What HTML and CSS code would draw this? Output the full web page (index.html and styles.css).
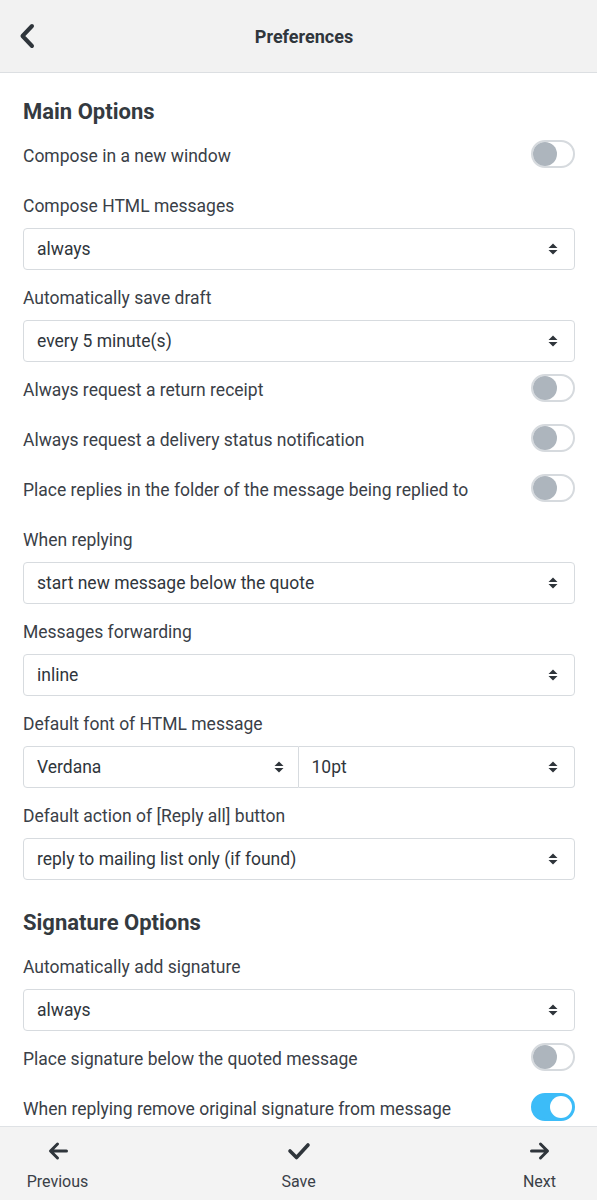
FILE: index.html
```html
<!DOCTYPE html>
<html lang="en">
<head>
<meta charset="utf-8">
<title>Preferences</title>
<link rel="stylesheet" href="styles.css">
</head>
<body>
<header class="topbar">
  <button class="back" aria-label="Back">
    <svg width="18" height="26" viewBox="0 0 18 26"><path d="M14 3 L4.5 13 L14 23" fill="none" stroke="#2f353b" stroke-width="4" stroke-linecap="round" stroke-linejoin="round"/></svg>
  </button>
  <h1 class="title">Preferences</h1>
  <span class="spacer"></span>
</header>

<main class="content">
  <section class="section">
    <h2 class="section-title">Main Options</h2>

    <div class="switch-row"><span class="label">Compose in a new window</span><span class="switch"></span></div>

    <div class="field">
      <div class="field-label">Compose HTML messages</div>
      <div class="select"><span>always</span><svg class="caret" width="10" height="12" viewBox="0 0 10 12"><path d="M5 0.5 L9.5 5 H0.5Z M5 11.5 L9.5 7 H0.5Z" fill="#2f353b"/></svg></div>
    </div>

    <div class="field">
      <div class="field-label">Automatically save draft</div>
      <div class="select"><span>every 5 minute(s)</span><svg class="caret" width="10" height="12" viewBox="0 0 10 12"><path d="M5 0.5 L9.5 5 H0.5Z M5 11.5 L9.5 7 H0.5Z" fill="#2f353b"/></svg></div>
    </div>

    <div class="switch-row"><span class="label">Always request a return receipt</span><span class="switch"></span></div>
    <div class="switch-row"><span class="label">Always request a delivery status notification</span><span class="switch"></span></div>
    <div class="switch-row"><span class="label">Place replies in the folder of the message being replied to</span><span class="switch"></span></div>

    <div class="field">
      <div class="field-label">When replying</div>
      <div class="select"><span>start new message below the quote</span><svg class="caret" width="10" height="12" viewBox="0 0 10 12"><path d="M5 0.5 L9.5 5 H0.5Z M5 11.5 L9.5 7 H0.5Z" fill="#2f353b"/></svg></div>
    </div>

    <div class="field">
      <div class="field-label">Messages forwarding</div>
      <div class="select"><span>inline</span><svg class="caret" width="10" height="12" viewBox="0 0 10 12"><path d="M5 0.5 L9.5 5 H0.5Z M5 11.5 L9.5 7 H0.5Z" fill="#2f353b"/></svg></div>
    </div>

    <div class="field">
      <div class="field-label">Default font of HTML message</div>
      <div class="select-pair">
        <div class="select select-left"><span>Verdana</span><svg class="caret" width="10" height="12" viewBox="0 0 10 12"><path d="M5 0.5 L9.5 5 H0.5Z M5 11.5 L9.5 7 H0.5Z" fill="#2f353b"/></svg></div>
        <div class="select select-right"><span>10pt</span><svg class="caret" width="10" height="12" viewBox="0 0 10 12"><path d="M5 0.5 L9.5 5 H0.5Z M5 11.5 L9.5 7 H0.5Z" fill="#2f353b"/></svg></div>
      </div>
    </div>

    <div class="field">
      <div class="field-label">Default action of [Reply all] button</div>
      <div class="select"><span>reply to mailing list only (if found)</span><svg class="caret" width="10" height="12" viewBox="0 0 10 12"><path d="M5 0.5 L9.5 5 H0.5Z M5 11.5 L9.5 7 H0.5Z" fill="#2f353b"/></svg></div>
    </div>
  </section>

  <section class="section section-next">
    <h2 class="section-title">Signature Options</h2>

    <div class="field">
      <div class="field-label">Automatically add signature</div>
      <div class="select"><span>always</span><svg class="caret" width="10" height="12" viewBox="0 0 10 12"><path d="M5 0.5 L9.5 5 H0.5Z M5 11.5 L9.5 7 H0.5Z" fill="#2f353b"/></svg></div>
    </div>

    <div class="switch-row"><span class="label">Place signature below the quoted message</span><span class="switch"></span></div>
    <div class="switch-row"><span class="label">When replying remove original signature from message</span><span class="switch on"></span></div>
  </section>
</main>

<footer class="bottombar">
  <a class="nav-item">
    <svg width="22" height="20" viewBox="0 0 22 20"><path d="M19.5 10 H4 M10.5 3 L3.5 10 L10.5 17" fill="none" stroke="#2f353b" stroke-width="3" stroke-linecap="round" stroke-linejoin="round"/></svg>
    <span>Previous</span>
  </a>
  <a class="nav-item">
    <svg width="24" height="20" viewBox="0 0 24 20"><path d="M3 10 L9.5 16.5 L21 4" fill="none" stroke="#2f353b" stroke-width="3.6" stroke-linecap="round" stroke-linejoin="round"/></svg>
    <span>Save</span>
  </a>
  <a class="nav-item">
    <svg width="22" height="20" viewBox="0 0 22 20"><path d="M2.5 10 H18 M11.5 3 L18.5 10 L11.5 17" fill="none" stroke="#2f353b" stroke-width="3" stroke-linecap="round" stroke-linejoin="round"/></svg>
    <span>Next</span>
  </a>
</footer>
</body>
</html>
```

FILE: styles.css
```css
* { box-sizing: border-box; }

html, body {
  margin: 0;
  padding: 0;
  background: #ffffff;
}

body {
  font-family: Roboto, "Liberation Sans", Arial, sans-serif;
  color: #3a4047;
  font-size: 17.5px;
}

.topbar {
  display: flex;
  align-items: center;
  height: 73px;
  background: #f2f2f2;
  border-bottom: 1px solid #dcdfe2;
}

.back {
  width: 58px;
  height: 72px;
  padding: 0 0 0 18px;
  border: 0;
  background: transparent;
  display: flex;
  align-items: center;
  justify-content: flex-start;
}

.title {
  flex: 1;
  margin: 0;
  text-align: center;
  font-size: 18px;
  font-weight: 700;
  color: #30363c;
}

.spacer {
  width: 47px;
}

.content {
  padding: 27px 22px 90px 23px;
}

.section-title {
  margin: 0 0 16px;
  font-size: 22px;
  line-height: 24px;
  font-weight: 700;
  color: #343a40;
}

.section-next {
  padding-top: 19px;
}

.switch-row {
  display: flex;
  align-items: center;
  justify-content: space-between;
  height: 28px;
  margin-bottom: 22px;
  line-height: 24px;
}

.switch-row .label {
  padding-top: 3px;
}

.switch {
  position: relative;
  flex: none;
  width: 44px;
  height: 28px;
  border: 2px solid #d6dade;
  border-radius: 14px;
  background: #ffffff;
}

.switch::after {
  content: "";
  position: absolute;
  left: 0px;
  top: 0px;
  width: 24px;
  height: 24px;
  border-radius: 50%;
  background: #adb5bd;
}

.switch.on {
  background: #3cbcf8;
  border-color: #3cbcf8;
}

.switch.on::after {
  left: auto;
  right: 1px;
  top: 1px;
  width: 22px;
  height: 22px;
  background: #ffffff;
}

.field {
  padding-top: 4px;
  margin-bottom: 12px;
}

.field-label {
  line-height: 24px;
  margin-bottom: 10px;
}

.select {
  display: flex;
  align-items: center;
  justify-content: space-between;
  height: 42px;
  padding: 0 16px 0 13px;
  border: 1px solid #d7dbdf;
  border-radius: 4px;
  color: #30363c;
  background: #ffffff;
}

.caret {
  flex: none;
}

.select-pair {
  display: flex;
}

.select-pair .select {
  flex: 1;
}

.select-left {
  border-radius: 4px 0 0 4px;
  padding-right: 14px;
}

.select-right {
  border-radius: 0 4px 4px 0;
  border-left: 0;
}

.bottombar {
  position: fixed;
  left: 0;
  right: 0;
  bottom: 0;
  height: 74px;
  display: flex;
  justify-content: space-between;
  padding: 0 22px;
  background: #f3f3f3;
  border-top: 1px solid #dfe2e5;
  font-size: 16px;
}

.nav-item {
  width: 71px;
  display: flex;
  flex-direction: column;
  align-items: center;
  padding-top: 14px;
  color: #3a4047;
  text-decoration: none;
}

.nav-item svg {
  display: block;
  margin-bottom: 11px;
}

.nav-item span {
  line-height: 20px;
}
```
